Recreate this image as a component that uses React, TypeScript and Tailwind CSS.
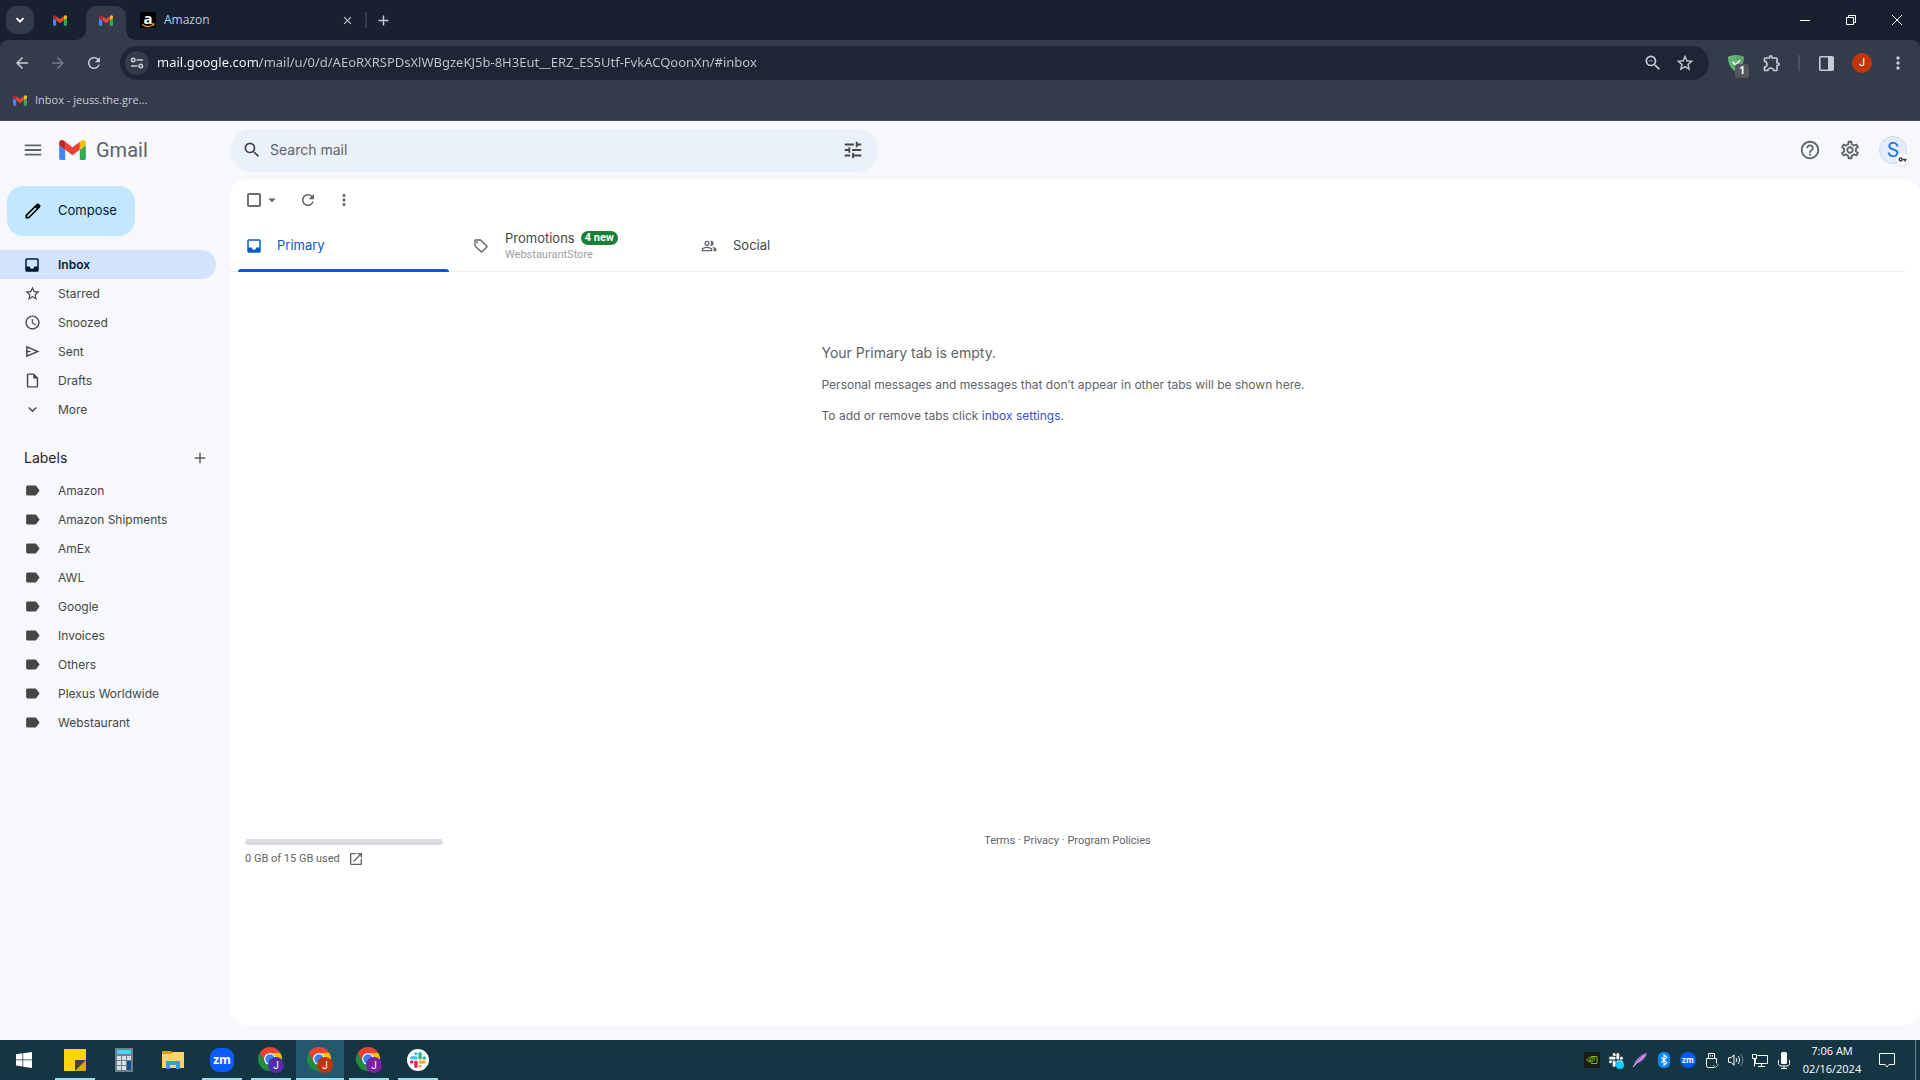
import type { ReactNode } from 'react'
import {
  MdAccessTime,
  MdAdd,
  MdArrowBack,
  MdArrowDropDown,
  MdArrowForward,
  MdClose,
  MdExpandMore,
  MdLabel,
  MdMenu,
  MdMoreVert,
  MdOpenInNew,
  MdOutlineExtension,
  MdOutlineHelpOutline,
  MdOutlineInsertDriveFile,
  MdOutlinePeopleAlt,
  MdOutlineSell,
  MdOutlineSettings,
  MdRefresh,
  MdSearch,
  MdStarBorder,
  MdTune,
  MdVpnKey,
  MdZoomOut,
} from 'react-icons/md'

const URL_TEXT =
  'mail.google.com/mail/u/0/d/AEoRXRSPDsXlWBgzeKJ5b-8H3Eut__ERZ_ES5Utf-FvkACQoonXn/#inbox'

const FOLDERS: { name: string; icon: ReactNode; active?: boolean }[] = [
  { name: 'Inbox', icon: <InboxIcon />, active: true },
  { name: 'Starred', icon: <MdStarBorder size={17} /> },
  { name: 'Snoozed', icon: <MdAccessTime size={17} /> },
  { name: 'Sent', icon: <SendIcon /> },
  { name: 'Drafts', icon: <MdOutlineInsertDriveFile size={17} /> },
  { name: 'More', icon: <MdExpandMore size={17} /> },
]

const LABELS = [
  'Amazon',
  'Amazon Shipments',
  'AmEx',
  'AWL',
  'Google',
  'Invoices',
  'Others',
  'Plexus Worldwide',
  'Webstaurant',
]

/* ---------- Icons and logos ---------- */

function InboxIcon() {
  return (
    <svg viewBox="0 0 24 24" className="h-[18px] w-[18px]" fill="currentColor" aria-hidden="true">
      <path d="M19 3H5a2 2 0 0 0-2 2v14a2 2 0 0 0 2 2h14a2 2 0 0 0 2-2V5a2 2 0 0 0-2-2zm0 11h-4a3 3 0 0 1-6 0H5V5h14v9z" />
    </svg>
  )
}

function SendIcon() {
  return (
    <svg viewBox="0 0 24 24" className="h-[17px] w-[17px]" fill="currentColor" aria-hidden="true">
      <path d="M3 4v16l19-8L3 4zm2 3 11.85 5L5 17v-3.5l6-1.5-6-1.5V7z" />
    </svg>
  )
}

function GmailLogo({ className }: { className: string }) {
  return (
    <svg viewBox="52 42 88 66" className={className} aria-hidden="true">
      <path fill="#4285f4" d="M58 108h14V74L52 59v43c0 3.32 2.69 6 6 6" />
      <path fill="#34a853" d="M120 108h14c3.32 0 6-2.69 6-6V59l-20 15" />
      <path fill="#fbbc04" d="M120 48v26l20-15v-8c0-7.42-8.47-11.65-14.4-7.2" />
      <path fill="#ea4335" d="M72 74V48l24 18 24-18v26L96 92" />
      <path fill="#c5221f" d="M52 51v8l20 15V48l-5.6-4.2c-5.94-4.45-14.4-.22-14.4 7.2" />
    </svg>
  )
}

function AmazonIcon() {
  return (
    <span className="relative flex h-4 w-4 shrink-0 justify-center bg-black text-[15px] leading-3 font-bold text-white">
      a
      <svg viewBox="0 0 16 16" className="absolute inset-0" fill="none" stroke="#ff9900" strokeWidth="1.2">
        <path d="M2 12.2c3.6 2.8 8.2 2.8 11.5.4" />
        <path d="M11.6 11.8H14l-.7 2" />
      </svg>
    </span>
  )
}

function ChromeIcon({ badge }: { badge: string }) {
  return (
    <svg viewBox="0 0 26 26" className="h-[26px] w-[26px]" aria-hidden="true">
      <g transform="scale(.5)">
        <path fill="#ea4335" d="M3.2 12A24 24 0 0 1 44.8 12L24 12A12 12 0 0 0 13.6 30Z" />
        <path fill="#fbbc04" d="M44.8 12A24 24 0 0 1 24 48L34.4 30A12 12 0 0 0 24 12Z" />
        <path fill="#1e8e3e" d="M24 48A24 24 0 0 1 3.2 12L13.6 30A12 12 0 0 0 34.4 30Z" />
        <circle cx="24" cy="24" r="12" fill="#fff" />
        <circle cx="24" cy="24" r="9.5" fill="#3b82f0" />
      </g>
      <circle cx="18" cy="18" r="8" fill={badge} />
      <text x="18" y="22" textAnchor="middle" fontSize="10" fill="#fff" fontFamily="Roboto, sans-serif">J</text>
    </svg>
  )
}

function SlackMark({ className, mono }: { className: string; mono?: boolean }) {
  return (
    <svg viewBox="0 0 122.8 122.8" className={className} aria-hidden="true">
      <path fill={mono ? '#fff' : '#e01e5a'} d="M25.8 77.6c0 7.1-5.8 12.9-12.9 12.9S0 84.7 0 77.6s5.8-12.9 12.9-12.9h12.9v12.9zm6.5 0c0-7.1 5.8-12.9 12.9-12.9s12.9 5.8 12.9 12.9v32.3c0 7.1-5.8 12.9-12.9 12.9s-12.9-5.8-12.9-12.9V77.6z" />
      <path fill={mono ? '#fff' : '#36c5f0'} d="M45.2 25.8c-7.1 0-12.9-5.8-12.9-12.9S38.1 0 45.2 0s12.9 5.8 12.9 12.9v12.9H45.2zm0 6.5c7.1 0 12.9 5.8 12.9 12.9s-5.8 12.9-12.9 12.9H12.9C5.8 58.1 0 52.3 0 45.2s5.8-12.9 12.9-12.9h32.3z" />
      <path fill={mono ? '#fff' : '#2eb67d'} d="M97 45.2c0-7.1 5.8-12.9 12.9-12.9s12.9 5.8 12.9 12.9-5.8 12.9-12.9 12.9H97V45.2zm-6.5 0c0 7.1-5.8 12.9-12.9 12.9s-12.9-5.8-12.9-12.9V12.9C64.7 5.8 70.5 0 77.6 0s12.9 5.8 12.9 12.9v32.3z" />
      <path fill={mono ? '#fff' : '#ecb22e'} d="M77.6 97c7.1 0 12.9 5.8 12.9 12.9s-5.8 12.9-12.9 12.9-12.9-5.8-12.9-12.9V97h12.9zm0-6.5c-7.1 0-12.9-5.8-12.9-12.9s5.8-12.9 12.9-12.9h32.3c7.1 0 12.9 5.8 12.9 12.9s-5.8 12.9-12.9 12.9H77.6z" />
    </svg>
  )
}

/* ---------- Browser ---------- */

function TabStrip() {
  return (
    <div className="flex h-10 items-center bg-[#182130] text-[#c7cbd6]">
      <button aria-label="Search tabs" className="ml-1.5 flex h-7 w-7 items-center justify-center rounded-[10px] bg-[#343c4b]">
        <svg viewBox="0 0 10 10" className="h-2.5 w-2.5" fill="none" stroke="#fff" strokeWidth="1.8">
          <path d="M1.5 3.2 5 6.7l3.5-3.5" />
        </svg>
      </button>
      <button aria-label="Gmail tab" className="ml-1.5 flex h-10 w-10 items-center justify-center">
        <GmailLogo className="h-[11px] w-[14px]" />
      </button>
      <button aria-label="Gmail tab, active" className="relative ml-1.5 flex h-[34px] w-10 items-center justify-center self-end rounded-t-[10px] bg-[#343c4b] pb-1.5">
        <GmailLogo className="h-[11px] w-[14px]" />
        <svg viewBox="0 0 10 10" className="absolute bottom-0 -left-2.5 h-2.5 w-2.5"><path fill="#343c4b" d="M10 0v10H0A10 10 0 0 0 10 0z" /></svg>
        <svg viewBox="0 0 10 10" className="absolute -right-2.5 bottom-0 h-2.5 w-2.5"><path fill="#343c4b" d="M0 0v10h10A10 10 0 0 1 0 0z" /></svg>
      </button>
      <div className="flex w-[241px] items-center pl-3.5">
        <AmazonIcon />
        <span className="ml-2 flex-1 text-xs">Amazon</span>
        <button aria-label="Close tab" className="flex h-4 w-4 items-center justify-center">
          <MdClose size={13} />
        </button>
        <span className="ml-2.5 h-4 w-0.5 bg-[#343c4b]" />
      </div>
      <button aria-label="New tab" className="ml-1.5 flex h-5 w-5 items-center justify-center">
        <MdAdd size={17} />
      </button>
      <div className="ml-auto flex h-full text-white">
        <button aria-label="Minimize" className="flex w-[46px] items-center justify-center">
          <svg viewBox="0 0 10 10" className="h-2.5 w-2.5"><path d="M0 5.5h10" stroke="currentColor" /></svg>
        </button>
        <button aria-label="Restore" className="flex w-[46px] items-center justify-center">
          <svg viewBox="0 0 10 10" className="h-2.5 w-2.5" fill="none" stroke="currentColor"><path d="M.5 2.5h7v7h-7zM2.5 2.5v-2h7v7h-2" /></svg>
        </button>
        <button aria-label="Close" className="flex w-[46px] items-center justify-center">
          <svg viewBox="0 0 10 10" className="h-2.5 w-2.5" fill="none" stroke="currentColor"><path d="m0 0 10 10M10 0 0 10" /></svg>
        </button>
      </div>
    </div>
  )
}

function AddressBar() {
  return (
    <div className="flex h-[46px] items-center text-[#c7cbd6]">
      <div className="flex w-[116px] shrink-0 pl-1">
        <button aria-label="Back" className="flex w-9 justify-center"><MdArrowBack size={18} /></button>
        <button aria-label="Forward" className="flex w-9 justify-center text-[#747a87]"><MdArrowForward size={18} /></button>
        <button aria-label="Reload" className="flex w-9 justify-center"><MdRefresh size={18} /></button>
      </div>
      <div className="ml-1 flex h-[34px] flex-1 items-center rounded-full bg-[#1e2636] pr-2 pl-[5px]">
        <button aria-label="View site information" className="flex h-6 w-6 items-center justify-center rounded-full bg-[#343c4b]">
          <svg viewBox="0 0 14 14" className="h-3.5 w-3.5" fill="none" stroke="currentColor" strokeWidth="1.6">
            <circle cx="3.2" cy="4" r="1.7" />
            <path d="M6.5 4H13M1 10h6.5" />
            <circle cx="10.8" cy="10" r="1.7" />
          </svg>
        </button>
        {/* host is drawn brighter than the path */}
        <input
          aria-label="Address"
          readOnly
          value={URL_TEXT}
          className="ml-2 min-w-0 flex-1 bg-linear-[90deg,#ffffff_103px,#c3c7ce_103px] bg-clip-text font-['Noto_Sans',sans-serif] text-[13px] text-transparent outline-none"
        />
        <button aria-label="Zoom" className="flex w-8 justify-center"><MdZoomOut size={20} /></button>
        <button aria-label="Bookmark this tab" className="flex w-8 justify-center"><MdStarBorder size={20} /></button>
      </div>
      <div className="flex shrink-0 items-center pr-1">
        <button aria-label="AdGuard" className="relative ml-[9px] flex w-9 justify-center">
          <svg viewBox="0 0 16 17" className="h-[17px] w-4">
            <path fill="#67b279" d="M8 0C5.5 0 2.5.6 0 1.7 0 4.5 0 12 8 17z" />
            <path fill="#5da46e" d="M8 0c2.5 0 5.5.6 8 1.7 0 2.8 0 10.3-8 15.3z" />
            <path stroke="#fff" strokeWidth="1.3" fill="none" d="m4.5 6.8 3 3L12 5" />
          </svg>
          <span className="absolute right-[5px] -bottom-1.5 flex h-3.5 w-3.5 items-center justify-center rounded-[3px] bg-[#55585a] text-[10px] font-bold text-white">1</span>
        </button>
        <button aria-label="Extensions" className="flex w-9 justify-center"><MdOutlineExtension size={20} /></button>
        <span className="mx-2 h-4 w-0.5 bg-[#4c5463]" />
        <button aria-label="Side panel" className="flex w-9 justify-center">
          <svg viewBox="0 0 15 15" className="h-[15px] w-[15px]">
            <rect x=".8" y=".8" width="13.4" height="13.4" rx="1" fill="none" stroke="currentColor" strokeWidth="1.6" />
            <path fill="currentColor" d="M9 1h5.500v13H9z" />
          </svg>
        </button>
        <button aria-label="Profile" className="flex w-9 justify-center">
          <span className="flex h-5 w-5 items-center justify-center rounded-full bg-[#bf360c] font-[Roboto,sans-serif] text-[11px] text-white">J</span>
        </button>
        <button aria-label="Chrome menu" className="flex w-9 justify-center"><MdMoreVert size={20} /></button>
      </div>
    </div>
  )
}

function Browser() {
  return (
    <div className="bg-[#182130] font-['Open_Sans',sans-serif]">
      <TabStrip />
      <div className="rounded-t-lg border-b border-[#4a4d57] bg-[#343c4b]">
        <AddressBar />
        <div className="flex h-[34px] items-center pb-1.5 pl-[13px]">
          <a href="#inbox" className="flex items-center text-[11px] text-[#c7cbd6]">
            <GmailLogo className="mr-2 h-[11px] w-[14px]" />
            Inbox - jeuss.the.gre...
          </a>
        </div>
      </div>
    </div>
  )
}

/* ---------- Gmail ---------- */

function MailHeader() {
  return (
    <header className="flex h-[58px] items-center text-[#5f6368]">
      <div className="flex w-[230px] shrink-0 items-center pl-[22px]">
        <button aria-label="Main menu"><MdMenu size={22} /></button>
        <a href="#inbox" className="ml-[15px] flex items-center gap-2.5 font-[Roboto,sans-serif] text-xl">
          <GmailLogo className="h-5 w-[27px]" />
          Gmail
        </a>
      </div>
      <form className="flex h-[43px] w-[648px] items-center rounded-full bg-[#eaf1fb] pr-3.5 pl-3 text-[#444746]">
        <button type="button" aria-label="Search"><MdSearch size={20} /></button>
        <input
          type="text"
          aria-label="Search mail"
          placeholder="Search mail"
          className="ml-2 min-w-0 flex-1 bg-transparent text-sm outline-none placeholder:text-[#5f6368]"
        />
        <button type="button" aria-label="Search options"><MdTune size={22} /></button>
      </form>
      <div className="ml-auto flex items-center pr-[13px]">
        <button aria-label="Support" className="flex w-10 justify-center"><MdOutlineHelpOutline size={22} /></button>
        <button aria-label="Settings" className="flex w-10 justify-center"><MdOutlineSettings size={22} /></button>
        <button aria-label="Account" className="relative ml-[9px] flex h-7 w-7 items-center justify-center rounded-full border border-[#cfdcef] bg-[#e4edfc] font-[Roboto,sans-serif] text-xl text-[#1a73e8]">
          S
          <span className="absolute -right-0.5 -bottom-0.5 flex h-3 w-3 items-center justify-center rounded-full bg-white text-[#3c4043] shadow">
            <MdVpnKey size={9} />
          </span>
        </button>
      </div>
    </header>
  )
}

function Sidebar() {
  return (
    <nav className="w-[230px] shrink-0 text-xs text-[#444746]">
      <button className="mt-[7px] ml-[7px] flex h-[50px] w-32 items-center rounded-2xl bg-[#c2e7ff] pl-4 text-[#001d35]">
        <svg viewBox="0 0 24 24" className="mr-[15px] h-5 w-5 fill-black">
          <path d="M20.41 4.94l-1.35-1.35c-.78-.78-2.05-.78-2.83 0L3 16.82V21h4.18L20.41 7.77c.79-.78.79-2.05 0-2.83zm-14 14.12L5 19v-1.36l9.82-9.82 1.41 1.41-9.82 9.83z" />
        </svg>
        <span className="text-[13px]">Compose</span>
      </button>
      <ul className="mt-3.5">
        {FOLDERS.map((f) => (
          <li key={f.name}>
            <a
              href={`#${f.name.toLowerCase()}`}
              className={
                f.active
                  ? 'mr-3.5 flex h-[29px] items-center rounded-r-full bg-[#d3e3fd] font-semibold text-[#001d35]'
                  : 'mr-3.5 flex h-[29px] items-center'
              }
            >
              <span className="ml-[22px] flex w-5 justify-center">{f.icon}</span>
              <span className="ml-4">{f.name}</span>
            </a>
          </li>
        ))}
      </ul>
      <div className="mt-[19px] mb-1 flex h-[29px] items-center justify-between pr-[21px] pl-6 text-sm text-[#1f1f1f]">
        <h2>Labels</h2>
        <button aria-label="Create new label"><MdAdd size={18} className="text-[#5f6368]" /></button>
      </div>
      <ul>
        {LABELS.map((label) => (
          <li key={label}>
            <a href="#label" className="flex h-[29px] items-center">
              <span className="ml-[22px] flex w-5 justify-center"><MdLabel size={17} /></span>
              <span className="ml-4">{label}</span>
            </a>
          </li>
        ))}
      </ul>
    </nav>
  )
}

function CategoryTabs() {
  return (
    <div role="tablist" className="mr-[15px] flex h-[51px] border-b border-[#eceff1] text-[13px] text-[#444746]">
      <button role="tab" aria-selected="true" className="relative flex w-[228px] items-center pl-[15px] text-[#0b57d0]">
        <InboxIcon />
        <span className="ml-3.5">Primary</span>
        <span className="absolute right-[9px] -bottom-px left-2 h-[3px] rounded-t-[3px] bg-[#0b57d0]" />
      </button>
      <button role="tab" aria-selected="false" className="flex w-[228px] items-center pl-[15px]">
        <MdOutlineSell size={16} className="text-[#5f6368]" />
        <span className="ml-4 text-left">
          <span className="flex items-center gap-1.5 leading-[18px]">
            Promotions
            <span className="rounded-full bg-[#188038] px-1 font-[Roboto,sans-serif] text-[11px] leading-[14px] font-bold text-white">4 new</span>
          </span>
          <span className="block font-[Roboto,sans-serif] text-[11px] leading-[16px] text-[#9aa0a6]">WebstaurantStore</span>
        </span>
      </button>
      <button role="tab" aria-selected="false" className="flex w-[228px] items-center pl-[15px]">
        <MdOutlinePeopleAlt size={16} className="text-[#5f6368]" />
        <span className="ml-4">Social</span>
      </button>
    </div>
  )
}

function MailPanel() {
  return (
    <main className="mb-[15px] min-w-0 flex-1 rounded-2xl bg-white text-[#5f6368]">
      <div className="flex h-[42px] items-center pl-[17px]">
        <input type="checkbox" aria-label="Select all" className="h-3.5 w-3.5 appearance-none rounded-xs border-2 border-[#6b6f74]" />
        <button aria-label="Select options" className="ml-0.5"><MdArrowDropDown size={18} /></button>
        <button aria-label="Refresh" className="ml-[18px]"><MdRefresh size={18} /></button>
        <button aria-label="More options" className="ml-[18px]"><MdMoreVert size={18} /></button>
      </div>
      <CategoryTabs />
      <div className="mr-6 flex justify-center pt-[71px] text-xs">
        <div>
          <p className="text-sm leading-5">Your Primary tab is empty.</p>
          <p className="mt-3 leading-5">Personal messages and messages that don’t appear in other tabs will be shown here.</p>
          <p className="mt-[11px] leading-5">
            To add or remove tabs click <a href="#settings" className="text-[#3c50c8]">inbox settings</a>.
          </p>
        </div>
      </div>
      <footer className="mt-[407px] mr-[15px] grid grid-cols-3 pl-[15px] font-[Roboto,sans-serif] text-[11px]">
        <div>
          <div className="mt-1.5 h-1.5 w-[198px] rounded-full bg-[#dadce0]" />
          <div className="mt-1.5 flex items-center gap-2">
            0 GB of 15 GB used
            <a href="#storage" aria-label="Manage storage"><MdOpenInNew size={16} /></a>
          </div>
        </div>
        <p className="pr-[15px] text-center leading-4">
          <a href="#terms">Terms</a> · <a href="#privacy">Privacy</a> · <a href="#policies">Program Policies</a>
        </p>
      </footer>
    </main>
  )
}

/* ---------- Taskbar ---------- */

function TaskButton({ label, open, active, children }: { label: string; open?: boolean; active?: boolean; children: ReactNode }) {
  return (
    <button
      aria-label={label}
      className={active ? 'relative flex w-12 items-center justify-center bg-[#24596d]' : 'relative flex w-12 items-center justify-center'}
    >
      {children}
      {open && <span className={active ? 'absolute inset-x-0 bottom-0 h-0.5 bg-[#9bdcf0]' : 'absolute inset-x-1 bottom-0 h-0.5 bg-[#9bdcf0]'} />}
    </button>
  )
}

function ZoomIcon({ className }: { className: string }) {
  return <span className={`flex items-center justify-center bg-[#0b5cff] leading-none font-bold text-white ${className}`}>zm</span>
}

function Tray() {
  return (
    <div className="flex items-center text-white">
      <span className="flex w-6 justify-center">
        <svg viewBox="0 0 16 16" className="h-4 w-4" fill="none" stroke="#76b900">
          <path fill="#1a1a1a" stroke="none" d="M0 0h16v16H0z" />
          <path d="M2.5 8c2.5-3.5 6-4 8.5-1.5-2 4-5 4.5-8.5 1.5z" />
          <path d="M7 4.5h6v7H7M5 8c1.5-2 3-2 4-.8C8 9 6.5 9.3 5 8z" />
        </svg>
      </span>
      <span className="relative flex w-6 justify-center">
        <SlackMark mono className="h-3.5 w-3.5" />
        <span className="absolute right-1 -bottom-0.5 h-2 w-2 rounded-full bg-[#00cfff]" />
      </span>
      <span className="flex w-6 justify-center">
        <svg viewBox="0 0 16 16" className="h-4 w-4">
          <path fill="#a66bd0" d="M1 15C2.5 8.5 7 3.5 15 .5c-.5 5-4.5 9.5-10.5 10.8z" />
          <path stroke="#f0dcff" strokeWidth=".8" d="M1 15 13 3" />
        </svg>
      </span>
      <span className="flex w-6 justify-center">
        <svg viewBox="0 0 12 16" className="h-4 w-3" fill="none" stroke="#fff" strokeWidth="1.1">
          <rect width="12" height="16" rx="5" fill="#0a84ff" stroke="none" />
          <path d="m3.2 5.3 5.6 5.4L6 13.2V2.8l2.8 2.5-5.6 5.4" />
        </svg>
      </span>
      <span className="flex w-6 justify-center">
        <ZoomIcon className="h-4 w-4 rounded-full text-[8px]" />
      </span>
      <span className="flex w-6 justify-center">
        <svg viewBox="0 0 14 17" className="h-[17px] w-3.5" fill="none" stroke="currentColor">
          <path d="M3.5 6.5v-5h6v5M9.5 15.5h-6a2 2 0 0 1-2-2v-7h10v5M5.5 3v1.5M7.5 3v1.5" />
          <path d="m8 13 2.5 2.5 3.5-4" stroke="#9fb0b5" />
        </svg>
      </span>
      <span className="flex w-6 justify-center">
        <svg viewBox="0 0 16 14" className="h-3.5 w-4" fill="none" stroke="currentColor">
          <path d="M.5 4.8H3l3-3v10.5l-3-3H.5zM8 5c1 1.2 1 2.8 0 4M10 3c2 2.3 2 5.7 0 8" />
          <path d="M12.5 1c3 3.5 3 8.5 0 12" stroke="#7c9299" />
        </svg>
      </span>
      <span className="flex w-6 justify-center">
        <svg viewBox="0 0 16 15" className="h-[15px] w-4" fill="none" stroke="currentColor">
          <path d="M5.5 2.5h10v8h-12v-5M.5 1.5h4v4h-4zM2.5 5.5v8M9.5 10.5v3M6 13.5h7" />
        </svg>
      </span>
      <span className="flex w-[23px] justify-center">
        <svg viewBox="0 0 12 17" className="h-[17px] w-3" fill="none" stroke="currentColor">
          <rect x="3" y="0" width="6" height="12" rx="1.5" fill="currentColor" stroke="none" />
          <path d="M.5 8v3.5c0 1.5 1 2.5 2.5 2.5h6c1.5 0 2.5-1 2.5-2.5V8M6 14v2.5M3 16.5h6" />
        </svg>
      </span>
      <div className="w-[74px] text-center text-[11px] leading-[18px]">
        <p>7:06 AM</p>
        <p>02/16/2024</p>
      </div>
      <button aria-label="Notifications" className="flex w-9 justify-center">
        <svg viewBox="0 0 16 16" className="h-4 w-4" fill="none" stroke="currentColor">
          <path d="M.5 1.5h15v11H10L8 15l-2-2.5H.5z" />
        </svg>
      </button>
      <span className="mr-1 ml-2.5 h-10 w-px bg-[#6b8189]" />
    </div>
  )
}

function Taskbar() {
  return (
    <div className="flex h-10 justify-between bg-[#143642] font-['Open_Sans',sans-serif]">
      <div className="flex gap-px">
        <button aria-label="Start" className="flex w-[50px] items-center pl-4">
          <svg viewBox="0 0 16 16" className="h-4 w-4" fill="#fff">
            <path d="M0 2.2 6.5 1.3v6.2H0zM7.2 1.2 16 0v7.5H7.2zM0 8.3h6.5v6.2L0 13.6zM7.2 8.3H16V16l-8.8-1.2z" />
          </svg>
        </button>
        <TaskButton label="Sticky Notes" open>
          <svg viewBox="0 0 22 22" className="h-[22px] w-[22px]">
            <path fill="#fcd40a" d="M0 0h22v22H0z" />
            <path fill="#e0a800" d="M11 22 22 11v11z" />
            <path fill="#3f4247" d="M11 11h11L11 22z" />
          </svg>
        </TaskButton>
        <TaskButton label="Calculator">
          <svg viewBox="0 0 18 24" className="h-6 w-[18px]">
            <path fill="#6f7f8b" d="M0 0h18v24H0z" />
            <path fill="#45d4f5" d="M2 2h14v4H2z" />
            <path fill="#d7dfe6" d="M2 8h4v4H2zM7 8h4v4H7zM12 8h4v4h-4zM2 13h4v4H2zM7 13h4v4H7zM2 18h4v4H2zM7 18h4v4H7z" />
            <path fill="#154a8c" d="M12 13h4v9h-4z" />
          </svg>
        </TaskButton>
        <TaskButton label="File Explorer">
          <svg viewBox="0 0 22 18" className="h-[18px] w-[22px]">
            <path fill="#e09a10" d="M0 0h9l2 2v2H0z" />
            <path fill="#fbd568" d="M0 3h9l2-2h11v16H0z" />
            <path fill="#3a97d8" d="M4 10h14v8h-4v-4H8v4H4z" />
          </svg>
        </TaskButton>
        <TaskButton label="Zoom" open>
          <ZoomIcon className="h-6 w-6 rounded-[9px] text-xs" />
        </TaskButton>
        <TaskButton label="Chrome" open><ChromeIcon badge="#512da8" /></TaskButton>
        <TaskButton label="Chrome, active" open active><ChromeIcon badge="#bf360c" /></TaskButton>
        <TaskButton label="Chrome" open><ChromeIcon badge="#7b1fa2" /></TaskButton>
        <TaskButton label="Slack" open>
          <span className="flex h-[22px] w-[22px] items-center justify-center rounded-full bg-white">
            <SlackMark className="h-4 w-4" />
          </span>
        </TaskButton>
      </div>
      <Tray />
    </div>
  )
}

export default function App() {
  return (
    <div className="flex min-h-screen flex-col">
      <Browser />
      <div className="flex flex-1 flex-col bg-[#f6f8fc] font-[Inter,sans-serif]">
        <MailHeader />
        <div className="flex flex-1">
          <Sidebar />
          <MailPanel />
        </div>
      </div>
      <Taskbar />
    </div>
  )
}
